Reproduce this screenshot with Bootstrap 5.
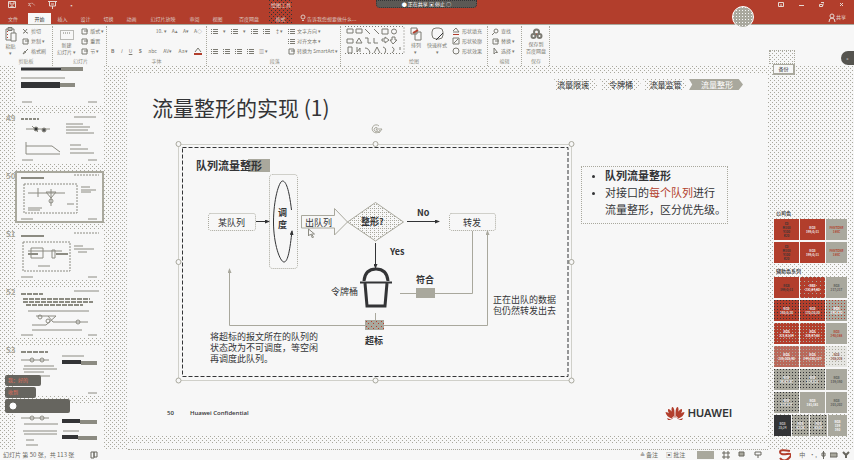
<!DOCTYPE html>
<html>
<head>
<meta charset="utf-8">
<title>流量整形的实现</title>
<meta name="viewport" content="width=device-width, initial-scale=1">
<link href="https://cdn.jsdelivr.net/npm/bootstrap@5.3.0/dist/css/bootstrap.min.css" rel="stylesheet">
<style>
:root{--paper:#f7f7f7;--mid:#a9a89d;--ink:#333436;--brand:#b23e2c;
--dot:conic-gradient(from 270deg at 1px 1px,var(--mid) 90deg,transparent 0);
--darkdot:conic-gradient(from 270deg at 1px 1px,var(--ink) 90deg,transparent 0);
--reddot:conic-gradient(from 270deg at 1px 1px,var(--brand) 90deg,transparent 0);
--whitedot:conic-gradient(from 270deg at 1px 1px,var(--paper) 90deg,transparent 0)}
body{font:5px/8px "Noto Sans CJK SC","Liberation Sans",sans-serif;color:var(--ink);background:var(--paper);white-space:nowrap}
button{border:0;background:none;padding:0;color:inherit;font:inherit;line-height:inherit}
a{color:inherit;text-decoration:none}
svg{display:block;flex:none;fill:none;stroke:currentColor}
.dither{background-color:var(--paper);background-image:var(--dot),var(--dot);background-size:4px 4px;background-position:0 0,2px 2px}
.titlebar{background:var(--brand);color:#e6d8d2;height:25px;border-bottom:1px solid var(--mid)}
.quick{left:8px;top:1px;gap:12px}
.tabs{padding:13px 0 0 0;height:24px}
.tabs a{width:23px;text-align:center;line-height:11px;color:#dcc9c1}
.tabs a.file{width:26px}
.tabs a.current{background:var(--paper);color:var(--ink);margin-left:2px}
.tabs a.broad{width:40px}
.context{left:269px;width:24px;height:24px;background-image:var(--darkdot),var(--darkdot);background-size:4px 4px;background-position:0 0,2px 2px;text-align:center;line-height:9px}
.sharing{left:376px;width:101px;height:8px;border-radius:0 0 4px 4px;background:#5b5955;color:#fff;border:1px dotted var(--ink)}
.avatar-dot{left:732px;top:6px;width:22px;height:22px;border:1px solid #fff;border-radius:50%;background:var(--mid);background-image:var(--whitedot);background-size:3px 3px;z-index:3}
.winbtns{right:10px;top:1px;gap:15px}
.share{right:8px;top:13px}
.ribbon{height:41px;padding-top:1px;color:#7b7a72}
.group{display:grid;grid-template-rows:repeat(4,10px);flex:none;border-right:1px dotted var(--mid);padding:0 4px;position:relative}
.group > div,.line{display:flex;align-items:center;gap:5px}
.group .caption{justify-content:center;color:#908f86}
.g-clip{width:53px}.g-slide{width:54px}.g-font{width:100px}.g-para{width:134px}.g-draw{width:147px}.g-edit{width:34px}.g-save{width:28px}
.tall{grid-row:span 3;display:flex;flex-direction:column;align-items:center;justify-content:center;line-height:7px}
.cols{grid-row:span 3;align-items:stretch!important}
.stack{display:grid;grid-template-rows:repeat(3,10px)}
.stack button,.line button{display:flex;align-items:center;gap:2px}
.work{min-height:0}
.thumbs{width:104px;overflow:hidden}
.thumbs a{display:flex;height:50px;margin-bottom:8px}
.thumbs a:first-child{height:40px;align-items:flex-end}
.thumbs b{width:16px;padding-left:6px;font-size:8px;line-height:8px;font-weight:700;color:var(--mid)}
.thumbs svg{background:var(--paper);width:87px;height:50px;color:#8c8b82}
.thumbs a.current svg{outline:2px solid var(--mid);outline-offset:-1px}
.rail{width:24px}
.stage{min-width:0}
.slide{background:var(--paper);margin-top:8px;height:361px}
.crumbs{padding:5px 25px 0 0;gap:2px;font-size:8px;line-height:11px}
.crumbs span{width:44px;height:11px;padding-left:3px;clip-path:polygon(0 0,92% 0,100% 50%,92% 100%,0 100%,6% 50%)}
.crumbs span.brief{width:41px;padding-left:9px}
.crumbs span.now{width:54px;background:var(--mid);color:#fff;padding-left:12px}
.slide h1{font-size:21px;line-height:28px;margin:3px 0 0 24px;font-weight:400}
.figure-row{padding-left:47px;margin-top:-1px}
.diagram text{fill:var(--ink);stroke:none;font-size:9px}
.diagram .strong{font-weight:700}
.note{font-size:9px;line-height:11px}
.points{width:147px;border:1px dotted var(--mid);margin:46px 0 0 6px;padding:0 0 3px 23px;font-size:11px;line-height:17px;height:58px}
.points li::marker{font-size:8px}
.points em{font-style:normal;color:var(--brand)}
.slide-foot{padding:21px 36px 0 39px;font:600 6px/14px "Open Sans",sans-serif}
.logo{font:600 11px/14px Inter,sans-serif;gap:3px}
.logo svg,.swirl{color:var(--brand)}
.swatches{width:86px;padding:142px 7px 0 6px}
.swatches h2{font-size:5px;line-height:9px;margin:3px 0 2px 2px;font-weight:500}
.swatches h2:first-child{margin-top:0}
.tones{display:grid;grid-template-columns:25px 25px 1fr;column-gap:1px;row-gap:2px;background:var(--paper)}
.tones.four{grid-template-columns:17px 17px 17px 1fr;margin-top:2px}
.tones span{height:21px;display:flex;align-items:center;justify-content:center;text-align:center;font-size:3px;line-height:4px;font-weight:700;white-space:pre}
.red{background:var(--brand);color:var(--ink)}.redw{background:var(--brand);color:#eee}
.grey{background:var(--mid);color:var(--brand)}.greyw{background:var(--mid);color:#fff}.greyk{background:var(--mid);color:#555}
.deep{background:var(--brand) var(--darkdot);background-size:3px 3px;color:#eee}
.rose{background:var(--brand) var(--dot);background-size:4px 4px;color:#fff}
.pink{background:var(--brand) var(--dot);background-size:3px 3px;color:#fff}
.salmon{background:#b9685a var(--dot);background-size:3px 3px;color:#fff}
.blush{background:var(--mid) var(--reddot);background-size:3px 3px;color:#fff}
.slate{background:var(--mid) var(--darkdot);background-size:3px 3px;color:#eee}
.mist{background:#e6e6e2 var(--dot);background-size:3px 3px;color:#8d4b40}
.black{background:var(--ink);color:#ccc}
.lower{height:6px;background:var(--paper);margin-top:9px;border-bottom:1px dotted var(--mid)}
.status{height:11px;line-height:10px;font-size:6px;padding:0 4px 0 3px;color:#68675f}
.status .gap-a{gap:8px}
.viewbtn{width:17px;height:8px;background:var(--mid)}
.tip{left:773px;top:64px;width:22px;height:11px;background:var(--paper);border:1px solid var(--mid);border-width:1px 2px 2px 1px;text-align:center;line-height:8px;z-index:2}
.tipbase{left:769px;top:50px;width:26px;height:14px;border:1px dotted var(--mid)}
.dock{right:0;top:51px;width:13px;height:14px;border-radius:7px 0 0 7px;background:#55544f;color:#ddd}
.chat{left:5px;top:375px;z-index:3;gap:1px}
.chat span{border-radius:2px;height:11px;line-height:10px;padding-left:3px;background:#66655f;color:#e0705c}
.chat .c1{width:36px}.chat .c2{width:31px}.chat .c3{width:65px;height:14px;color:#fff}
</style>
<script src="https://cdn.jsdelivr.net/npm/bootstrap@5.3.0/dist/js/bootstrap.bundle.min.js"></script>
</head>
<body class="d-flex flex-column vh-100 overflow-hidden position-relative">
<svg width="0" height="0" class="position-absolute">
 <symbol id="cut" viewBox="0 0 7 7"><path d="M1 1l4 4M5 1L2 5M1 5h1M5 5h1"/></symbol>
 <symbol id="sheet" viewBox="0 0 7 7"><path d="M1 1h5v5H1zM3 3h4"/></symbol>
 <symbol id="brush" viewBox="0 0 7 7"><path d="M6 1L3 4M1 6l2-3 1 1z"/></symbol>
 <symbol id="rows" viewBox="0 0 7 7"><path d="M0 1.5h1M2 1.5h5M0 3.5h1M2 3.5h5M0 5.5h1M2 5.5h5"/></symbol>
 <symbol id="lens" viewBox="0 0 7 7"><circle cx="4" cy="3" r="2"/><path d="M2.500 4.500L0 7"/></symbol>
 <symbol id="arrowcur" viewBox="0 0 7 7"><path d="M2 0v6l1.500-1.500h2z"/></symbol>
</svg>

<header class="titlebar position-relative flex-shrink-0">
 <div class="quick position-absolute d-flex">
  <button aria-label="保存"><svg width="8" height="8"><path d="M.5 .5h7v6h-7zM2 1v2h4V1M3 7V5h2v2"/></svg></button>
  <button aria-label="撤销"><svg width="8" height="8"><path stroke-dasharray="1 1" d="M1 2v3h3M1 4q3-4 6 1"/></svg></button>
  <button aria-label="放映"><svg width="9" height="8"><path d="M0 .5h9M1.500 1v4h6V1M4.500 5v3M3 3h3"/></svg></button>
  <button aria-label="更多">▪</button>
 </div>
 <div class="context position-absolute">绘图工具</div>
 <nav class="tabs d-flex">
  <a href="#" class="file">文件</a><a href="#" class="current">开始</a><a href="#">插入</a><a href="#">设计</a><a href="#">切换</a><a href="#">动画</a><a href="#" class="broad">幻灯片放映</a><a href="#">审阅</a><a href="#">视图</a><a href="#" class="broad">百度网盘</a><a href="#" class="position-relative">格式</a>
  <a href="#" class="w-auto d-flex ms-2"><svg width="6" height="10"><circle cx="3" cy="4" r="2"/><path d="M2 7.500h2"/></svg>&nbsp;告诉我您想要做什么...</a>
 </nav>
 <div class="sharing position-absolute top-0 d-flex align-items-center justify-content-center"><span>● 正在共享 ▣ 停止 ○</span></div>
 <div class="avatar-dot position-absolute"></div>
 <div class="winbtns position-absolute d-flex">
  <button aria-label="功能区"><svg width="6" height="7"><path d="M.5 1.500h5v4h-5zM3 5V3"/></svg></button>
  <button aria-label="最小化"><svg width="5" height="7"><path d="M0 4.500h5"/></svg></button>
  <button aria-label="还原"><svg width="5" height="7"><path d="M.5 3.500h3v2h-3zM2 1.500h3v3"/></svg></button>
  <button aria-label="关闭"><svg width="5" height="7"><path d="M1 2l3 3M4 2L1 5"/></svg></button>
 </div>
 <button class="share position-absolute d-flex"><svg width="8" height="9"><circle cx="4" cy="3" r="2"/><path d="M1 9q0-4 3-4t3 4"/></svg>共享</button>
</header>

<section class="ribbon d-flex flex-shrink-0">
 <div class="group g-clip">
  <div class="cols">
   <button class="tall"><svg width="13" height="15"><path d="M2 2h8v11H2zM4 .5h4v3H4z"/><path d="M7 6h5v8H7z" fill="#f7f7f7"/><path stroke="#b23e2c" stroke-dasharray="1 2" d="M3.500 4v7"/></svg>粘贴<br>▾</button>
   <div class="stack"><button><svg width="7" height="7"><use href="#cut"/></svg>剪切</button><button><svg width="7" height="7"><use href="#sheet"/></svg>复制 ▾</button><button><svg width="7" height="7"><use href="#brush"/></svg>格式刷</button></div>
  </div>
  <div class="caption">剪贴板</div>
 </div>
 <div class="group g-slide">
  <div class="cols">
   <button class="tall"><svg width="14" height="13"><path stroke-dasharray="1 1" d="M.5 2.500h13v9H.5zM3 5h8"/></svg>新建<br>幻灯片 ▾</button>
   <div class="stack"><button><svg width="7" height="7"><use href="#sheet"/></svg>版式 ▾</button><button><svg width="7" height="7"><use href="#sheet"/></svg>重置</button><button><svg width="7" height="7"><use href="#sheet"/></svg>节 ▾</button></div>
  </div>
  <div class="caption">幻灯片</div>
 </div>
 <div class="group g-font">
  <div class="justify-content-end"><button>10. ▾</button><button>A▴</button><button>A▾</button><button>A◇</button></div>
  <div></div>
  <div class="justify-content-between"><button><b>B</b></button><button><i>I</i></button><button><u>U</u></button><button><b>S</b></button><button>abc</button><button>AV▾</button><button>Aa▾</button><button aria-label="字体颜色"><svg width="8" height="8"><path d="M1 5l3-4 3 4"/><path stroke="#b23e2c" stroke-width="2" d="M0 7h8"/></svg></button></div>
  <div class="caption">字体</div>
 </div>
 <div class="group g-para">
  <div class="cols justify-content-between">
   <div class="stack flex-grow-1">
    <div class="line"><svg width="7" height="7"><use href="#rows"/></svg>▾<svg width="7" height="7"><use href="#rows"/></svg>▾<svg width="7" height="7"><use href="#rows"/></svg><svg width="7" height="7"><use href="#rows"/></svg>↕▾</div><div></div>
    <div class="line"><svg width="7" height="7"><use href="#rows"/></svg><svg width="7" height="7"><use href="#rows"/></svg><svg width="7" height="7"><use href="#rows"/></svg><svg width="7" height="7"><use href="#rows"/></svg>▥ ▾</div>
   </div>
   <div class="stack"><button><svg width="7" height="7"><use href="#rows"/></svg>文字方向 ▾</button><button><svg width="7" height="7"><use href="#rows"/></svg>对齐文本 ▾</button><button><svg width="7" height="7"><use href="#sheet"/></svg>转换为 SmartArt ▾</button></div>
  </div>
  <div class="caption">段落</div>
 </div>
 <div class="group g-draw">
  <div class="cols">
   <svg width="60" height="30"><path stroke-dasharray="1 2" d="M0 .5h59v27H0"/><path d="M2 3h6v4H2zM11 3h6v4h-6zM20 3l5 5M29 3l5 5M37 3h6v5h-6zM2 13h6v4H2zM11 17l3-5 3 5zM20 12h3v5h3M29 12v5h4M37 13h3v-2l4 3-4 3v-2h-3zM47 11h3v3h2l-4 4-3-4h2zM3 21h4v6H3zM12 21v5l3-4v4M20 22q4 0 5 5M29 27l3-6 3 6M38 21q4 1 2 6M47 21q4 2 0 6M55 21v3"/><circle cx="49" cy="5.500" r="2.500"/></svg>
   <button class="tall"><svg width="12" height="14"><path d="M5 5h6v8H5zM1 1h6v6H1z"/><path stroke="#b23e2c" stroke-width="2" d="M3 6l5-3"/></svg>排列<br>▾</button>
   <button class="tall"><svg width="15" height="14"><rect x="2" y="1" width="11" height="11" rx="4"/><path stroke="#333436" d="M13 6l-7 7"/></svg>快速样式<br>▾</button>
   <div class="stack"><button><svg width="8" height="8"><path d="M1 4l3-3 3 4H1"/><path stroke="#b23e2c" d="M1 7.500h6"/></svg>形状填充</button><button><svg width="8" height="8"><path d="M1 1h6v6H1zM2 6l4-4"/></svg>形状轮廓</button><button><svg width="8" height="8"><circle cx="4" cy="4" r="3"/></svg>形状效果</button></div>
  </div>
  <div class="caption">绘图</div>
 </div>
 <div class="group g-edit">
  <div class="cols"><div class="stack"><button><svg width="7" height="7"><use href="#lens"/></svg>查找</button><button><svg width="7" height="7"><use href="#sheet"/></svg>替换 ▾</button><button><svg width="7" height="7"><use href="#arrowcur"/></svg>选择 ▾</button></div></div>
  <div class="caption">编辑</div>
 </div>
 <div class="group g-save">
  <div class="cols justify-content-center"><button class="tall"><svg width="13" height="12"><g stroke-width="2"><circle cx="6.500" cy="4" r="2.500"/><circle cx="3.500" cy="8" r="2"/><circle cx="9.500" cy="8" r="2"/></g><path stroke="#b23e2c" d="M6 6h1"/></svg>保存到<br>百度网盘</button></div>
  <div class="caption">保存</div>
 </div>
</section>

<main class="work dither d-flex flex-grow-1">
 <nav class="thumbs flex-shrink-0" id="thumbs">
  <a href="#"><b></b><svg viewBox="0 0 87 50"><path stroke="#333436" stroke-width="3" d="M5 13h40"/><path d="M5 22h44"/><path stroke="#333436" stroke-width="6" d="M5 29h39"/><path stroke-width="4" d="M44 29h15M45 13h22"/><path d="M6 46h10M72 46h9"/></svg></a>
  <a href="#"><b>49</b><svg viewBox="0 0 87 50"><path stroke-width="2" stroke-dasharray="3 1" d="M5 5h18"/><path d="M10 15h24M16 12l6 6M50 10h17M50 13h24M50 16h22M50 19h28M10 28v12h34M10 32h26l8 6M54 31h11M54 35h18M54 39h24M58 3h22M6 46h11M72 46h9"/><circle cx="20" cy="15" r="2" fill="#333436"/><circle cx="28" cy="16" r="2" fill="#555"/></svg></a>
  <a href="#" class="current"><b>50</b><svg viewBox="0 0 87 50"><path stroke-width="2" d="M5 6h23"/><path stroke-dasharray="2 1" d="M8 12h53v29H8zM58 3h25"/><path d="M12 21h37M22 16v9M35 17v17M30 20h10l-5 6zM12 36h14M12 38h12M65 15h9M65 18h15M65 20h10M51 32h7M5 47h12M72 47h9"/><circle cx="35" cy="29" r="2"/></svg></a>
  <a href="#"><b>51</b><svg viewBox="0 0 87 50"><path stroke-width="2" d="M5 6h23"/><path stroke-dasharray="2 1" d="M7 12h47v29H7zM58 3h25"/><path d="M12 21h34M15 18h12v10H15zM36 20h3v8h-3zM22 36h12M58 16h9M58 19h20M62 22h9M5 47h12M72 47h9"/><path stroke-width="2" d="M12 24h10M40 24h12"/></svg></a>
  <a href="#"><b>52</b><svg viewBox="0 0 87 50"><path stroke-width="2" stroke-dasharray="5 1" d="M5 6h22M7 11h67M7 14h70M10 17h57"/><path d="M12 23h61M20 28h20l-10 9h-14M32 28l5 6h35M16 42h50M58 3h25M5 47h12M72 47h9"/><circle cx="24" cy="29" r="2"/><circle cx="32" cy="33" r="2"/><circle cx="62" cy="34" r="2"/></svg></a>
  <a href="#"><b>53</b><svg viewBox="0 0 87 50"><path stroke-width="2" stroke-dasharray="5 1" d="M5 6h27"/><path d="M5 14h28M8 20h30M7 23h34M8 26h20M7 30h27M46 10h22M72 47h9"/><circle cx="16" cy="14" r="2"/><circle cx="26" cy="14" r="2"/><path stroke="#333436" stroke-width="4" d="M46 16h19"/><path stroke-width="4" d="M65 17h16"/></svg></a>
  <a href="#"><b>54</b><svg viewBox="0 0 87 50"><path d="M5 14h28M8 20h34M7 27h34M8 30h33M10 36h8M10 41h12M47 27h16M5 47h12M72 47h9"/><circle cx="16" cy="14" r="2"/><circle cx="26" cy="14" r="2"/><path stroke="#333436" stroke-width="4" d="M46 17h18M46 33h16"/><path stroke-width="4" d="M64 18h17M62 34h19"/></svg></a>
 </nav>
 <div class="rail flex-shrink-0"></div>
 <div class="stage flex-grow-1">
  <article class="slide">
   <div class="crumbs d-flex justify-content-end"><span class="dither">流量限速</span><span class="dither brief">令牌桶</span><span class="dither">&nbsp; 流量监管</span><span class="now">流量整形</span></div>
   <h1>流量整形的实现 (1)</h1>
   <div class="figure-row d-flex">
    <svg class="diagram" width="400" height="265" viewBox="175 120 400 265">
     <defs>
      <pattern id="speck" width="4" height="4" patternUnits="userSpaceOnUse"><path fill="#a9a89d" stroke="none" d="M0 0h1v1H0zM2 2h1v1H2zM2 0h1v1H2z"/></pattern>
      <pattern id="redspeck" width="5" height="5" patternUnits="userSpaceOnUse"><path fill="#a9a89d" stroke="none" d="M0 0h5v5H0z"/><path fill="#b23e2c" stroke="none" d="M1 1h1v1H1zM3 3h1v1H3z"/></pattern>
      <marker id="tipk" markerWidth="5" markerHeight="4" refX="4" refY="2" orient="auto" markerUnits="userSpaceOnUse"><path d="M0 0l5 2-5 2z" fill="#333436" stroke="none"/></marker>
      <marker id="tipg" markerWidth="5" markerHeight="4" refX="4" refY="2" orient="auto" markerUnits="userSpaceOnUse"><path d="M0 0l5 2-5 2z" fill="#a9a89d" stroke="none"/></marker>
     </defs>
     <g stroke="#a9a89d">
      <path stroke-dasharray="1 1" d="M178.500 144.500h393v236h-393z"/>
      <g fill="#f7f7f7"><circle cx="178.500" cy="144" r="2.500"/><circle cx="375.500" cy="144" r="2.500"/><circle cx="571.500" cy="144" r="2.500"/><circle cx="178.500" cy="262" r="2.500"/><circle cx="571.500" cy="262" r="2.500"/><circle cx="178.500" cy="380.500" r="2.500"/><circle cx="375.500" cy="380.500" r="2.500"/><circle cx="571.500" cy="380.500" r="2.500"/></g>
      <path d="M379 126a4 4 0 1 0 1 4M376 129h6l-3 4zM377.500 128a2 2 0 1 0 0 3"/>
      <g stroke-dasharray="1 1"><rect x="208.500" y="213.500" width="47" height="17" rx="2"/><rect x="269.500" y="174.500" width="28" height="94" rx="3"/><rect x="449.500" y="213.500" width="46" height="17" rx="2"/></g>
      <path d="M301.500 215.500h33v-7l13 13.500-13 13v-7h-33z"/>
      <path fill="url(#speck)" d="M347.500 222l28-19.500 28 19.500-28 19z"/>
      <path d="M400 293.500h72.500V231"/><path marker-end="url(#tipg)" d="M375.500 325.500h112V231"/><path marker-end="url(#tipg)" d="M375.500 325.500H229.500V269"/><path d="M375.500 313v8"/>
     </g>
     <path d="M182.500 147.500h385.500v229H182.500z" stroke-dasharray="4 2"/>
     <path fill="#a9a89d" stroke="none" d="M248 159h22v13h-22z"/>
     <path fill="#a9a89d" stroke="none" d="M416 288h19v10h-19z"/>
     <path fill="url(#redspeck)" stroke="none" d="M365 320h19v10h-19z"/>
     <g stroke="#333436">
      <path marker-end="url(#tipk)" d="M256 221.500h13"/><path marker-end="url(#tipk)" d="M407 221.500h32"/><path marker-end="url(#tipk)" d="M375.500 243v25"/>
      <path marker-end="url(#tipk)" d="M291.500 210C289 189 286 181 282.500 181S273.500 200 273.500 222 280 262 284 262 290 249 292 231"/>
      <path stroke-width="3" d="M364 281q1-12 12-12t12 12M365 283l2 23h18l2-23"/><path stroke-width="2" d="M360 282.500h32"/>
     </g>
     <path fill="#f7f7f7" stroke="#8c8b82" d="M308.500 229v7l2-2 2 4 1-1-2-3h3z"/>
     <text x="196" y="170" class="strong" style="font-size:11px">队列流量整形</text>
     <text x="218" y="226">某队列</text><text x="278" y="216" class="strong">调</text><text x="278" y="228" class="strong">度</text><text x="305" y="226">出队列</text>
     <text x="361" y="225" class="strong">整形?</text><text x="417" y="216" class="strong">No</text><text x="463" y="226">转发</text><text x="390" y="255" class="strong">Yes</text>
     <text x="331" y="295">令牌桶</text><text x="416" y="283" class="strong">符合</text><text x="365" y="344" class="strong">超标</text>
     <foreignObject x="493" y="294" width="72" height="24"><div class="note">正在出队的数据<br>包仍然转发出去</div></foreignObject>
     <foreignObject x="210" y="331" width="130" height="36"><div class="note">将超标的报文所在的队列的<br>状态改为不可调度，等空闲<br>再调度此队列。</div></foreignObject>
    </svg>
    <ul class="points"><li><b>队列流量整形</b></li><li>对接口的<em>每个队列</em>进行<br>流量整形，区分优先级。</li></ul>
   </div>
   <footer class="slide-foot d-flex align-items-center"><span>50</span><span class="ms-3">Huawei Confidential</span>
    <span class="logo ms-auto d-flex align-items-center"><svg width="20" height="14" viewBox="0 0 20 14"><path fill="currentColor" stroke="none" d="M9.500 12Q5 5 7 1q3-1 2.500 11zM10.500 12Q15 5 13 1q-3-1-2.500 11zM8.500 12Q2 7 3 3q4 0 5.500 9zM11.500 12Q18 7 17 3q-4 0-5.500 9zM8 13Q1 11 .5 6 5 6 8 13zM12 13q7-2 7.500-7Q15 6 12 13zM7 14H3l-1-2zM13 14h4l1-2z"/></svg>HUAWEI</span>
   </footer>
  </article>
  <div class="lower"></div>
 </div>
 <aside class="swatches flex-shrink-0">
  <h2>公司色</h2>
  <div class="tones"><span class="red">C0
M100
Y100
K20</span><span class="redw">RGB
199/0/11</span><span class="grey">PANTONE
186C</span><span class="red">C0
M100
Y100
K20</span><span class="redw">RGB
199/0/11</span><span class="grey">PANTONE
186C</span></div>
  <h2>辅助色系列</h2>
  <div class="tones"><span class="red">RGB
199/0/11</span><span class="rose">RGB
232/84/80</span><span class="greyk">RGB
217/217</span><span class="deep">RGB
160/0/20</span><span class="deep">RGB
170/20/20</span><span class="blush">RGB
241/170</span><span class="pink">RGB
221/63/54</span><span class="pink">RGB
235/97/83</span><span class="grey">RGB
240/188</span><span class="salmon">RGB
236/105/90</span><span class="salmon">RGB
244/150/127</span><span class="mist">RGB
250/220</span><span class="slate">RGB
89/87/87</span><span class="slate">RGB
114/113</span><span class="greyk">RGB
159/160</span><span class="slate">RGB
137/137</span><span class="greyw">RGB
181/181</span><span class="greyk">RGB
201/202</span></div>
  <div class="tones four"><span class="black">RGB
35/24</span><span class="slate">RGB
62/58</span><span class="slate">RGB
89/87</span><span class="greyw">RGB
159
160</span></div>
 </aside>
</main>

<footer class="status d-flex align-items-center flex-shrink-0">
 <span>幻灯片 第 50 张，共 113 张</span><svg class="ms-3" width="8" height="8"><path d="M1 1h3v6H1zM4 1h3v5H4z"/></svg>
 <div class="ms-auto d-flex align-items-center gap-a">
  <button>≙ 备注</button><button>▣ 批注</button><button class="viewbtn ms-1" aria-label="普通视图"></button>
  <svg width="8" height="8"><path d="M1 1h2v2H1zM5 1h2v2H5zM1 5h2v2H1zM5 5h2v2H5z"/></svg><svg width="8" height="8"><path fill="#a9a89d" d="M1 1h5v4H1z"/></svg><svg width="8" height="8"><path d="M1 1h6v3H1zM4 4v3"/></svg>
  <svg class="swirl ms-2" width="13" height="11" viewBox="0 0 13 11"><path stroke-width="2" d="M12 2Q2 0 2 3t7 2 2 4-9 0"/></svg>
  <div class="d-flex align-items-center gap-1"><span>中</span><span>•,</span><svg width="5" height="8"><path d="M2.500 0v8M1 2v3h3V2z"/></svg><svg width="8" height="8"><path fill="#a9a89d" d="M0 2h7v4H0z"/></svg><svg width="8" height="8"><path stroke-width="2" d="M1 1l3 3 3-3M4 4v3"/></svg></div>
 </div>
</footer>

<div class="tipbase dither position-absolute"></div><div class="tip position-absolute">备份</div>
<button class="dock position-absolute" aria-label="展开">«</button>
<div class="chat position-absolute d-flex flex-column"><span class="c1">我：好的</span><span class="c2">收到</span><span class="c3"><svg width="9" height="12"><circle cx="5" cy="7" r="3" fill="#fff"/></svg></span></div>
</body>
</html>
